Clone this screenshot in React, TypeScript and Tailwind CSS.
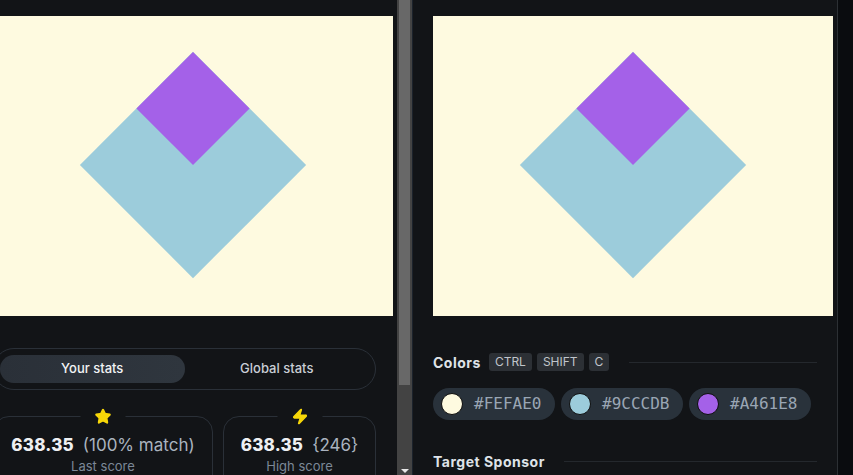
import { Star, Zap } from "lucide-react";

const COLORS = ["#FEFAE0", "#9CCCDB", "#A461E8"];

const TargetCanvas = () => (
  <svg width="400" height="300" viewBox="0 0 400 300" className="block shrink-0">
    <rect width="400" height="300" fill="#FEFAE0" />
    <rect x="120" y="69" width="160" height="160" fill="#9CCCDB" transform="rotate(45 200 149)" />
    <rect x="160" y="52.5" width="80" height="80" fill="#A461E8" transform="rotate(45 200 92.5)" />
  </svg>
);

const StatCard = ({
  icon,
  score,
  extra,
  label,
  className,
}: {
  icon: React.ReactNode;
  score: string;
  extra: string;
  label: string;
  className?: string;
}) => (
  <div
    className={`relative rounded-[16px] border border-[#2a3038] pt-[18px] pb-4 ${className ?? ""}`}
  >
    <div className="absolute left-1/2 top-[-9px] -translate-x-1/2 bg-[#121417] px-[14px]">
      {icon}
    </div>
    <div className="flex items-baseline justify-center gap-[9px] leading-5">
      <span className="text-[17px] font-extrabold tracking-[0.2px] text-[#eef0f3]">{score}</span>
      <span className="text-[17px] text-[#aab3bf]">{extra}</span>
    </div>
    <div className="mt-[3px] text-center text-[13px] leading-4 text-[#7c8897]">{label}</div>
  </div>
);

export default function App() {
  return (
    <div
      className="flex h-[475px] w-[853px] overflow-hidden bg-[#0a0c0f]"
      style={{ fontFamily: "Inter, 'Noto Sans', sans-serif" }}
    >
      {/* left panel, scrolled slightly sideways */}
      <div className="w-[397px] shrink-0 overflow-hidden bg-[#121417]">
        <div className="ml-[-7px] w-[400px] pt-4">
          <TargetCanvas />

          <div className="mt-8 flex w-[383px] rounded-full border border-[#2a3038] p-[6px]">
            <button className="h-7 flex-1 rounded-full bg-gradient-to-r from-[#2a3038] to-[#2f363e] text-[13px] font-medium text-[#f1f3f5]">
              Your stats
            </button>
            <button className="h-7 flex-1 rounded-full text-[13px] font-medium text-[#c9ced5]">
              Global stats
            </button>
          </div>

          <div className="mt-[26px] flex w-[383px] gap-[10px]">
            <StatCard
              className="w-[220px]"
              icon={<Star size={17} fill="#f7d708" color="#f7d708" />}
              score="638.35"
              extra="(100% match)"
              label="Last score"
            />
            <StatCard
              className="flex-1"
              icon={<Zap size={17} fill="#f7d708" color="#f7d708" />}
              score="638.35"
              extra="{246}"
              label="High score"
            />
          </div>
        </div>
      </div>

      {/* scrollbar */}
      <div className="flex w-[15px] shrink-0 flex-col bg-[#434343]">
        <div className="mx-[2px] h-[385px] bg-[#686868]" />
        <div className="flex flex-1 items-end justify-center pb-[2px]">
          <div className="h-0 w-0 border-x-[4px] border-t-[4px] border-x-transparent border-t-[#e8e8e8]" />
        </div>
      </div>
      <div className="w-px shrink-0 bg-[#1b222b]" />

      {/* right panel */}
      <div className="w-[425px] shrink-0 border-r border-[#2c3034] bg-[#121417] pl-5 pt-4">
        <TargetCanvas />

        <div className="mt-[37px] flex h-[18px] items-center">
          <span className="text-[14px] font-bold tracking-[0.5px] text-[#dfe3e8]">Colors</span>
          <div className="ml-2 flex gap-[5px]">
            {["CTRL", "SHIFT", "C"].map((k) => (
              <span
                key={k}
                className="flex h-[18px] items-center rounded-[3px] bg-[#2c3035] px-[6px] text-[12px] text-[#c0c5cb]"
              >
                {k}
              </span>
            ))}
          </div>
          <div className="ml-5 mr-5 h-px flex-1 bg-[#24282d]" />
        </div>

        <div className="mt-[17px] flex gap-[6px]">
          {COLORS.map((c) => (
            <div key={c} className="flex h-8 w-[122px] items-center rounded-full bg-[#29323b] pl-2">
              <span
                className="h-[22px] w-[22px] rounded-full border-[1.5px] border-[#0e0e0e]"
                style={{ backgroundColor: c }}
              />
              <span
                className="ml-[11px] text-[16px] text-[#9aa6b4]"
                style={{ fontFamily: "'DejaVu Sans Mono', 'Liberation Mono', monospace" }}
              >
                {c}
              </span>
            </div>
          ))}
        </div>

        <div className="mt-[33px] flex h-4 items-center">
          <span className="text-[14px] font-bold tracking-[0.5px] text-[#dfe3e8]">Target Sponsor</span>
          <div className="ml-[19px] mr-5 h-px flex-1 bg-[#24282d]" />
        </div>
      </div>
    </div>
  );
}
